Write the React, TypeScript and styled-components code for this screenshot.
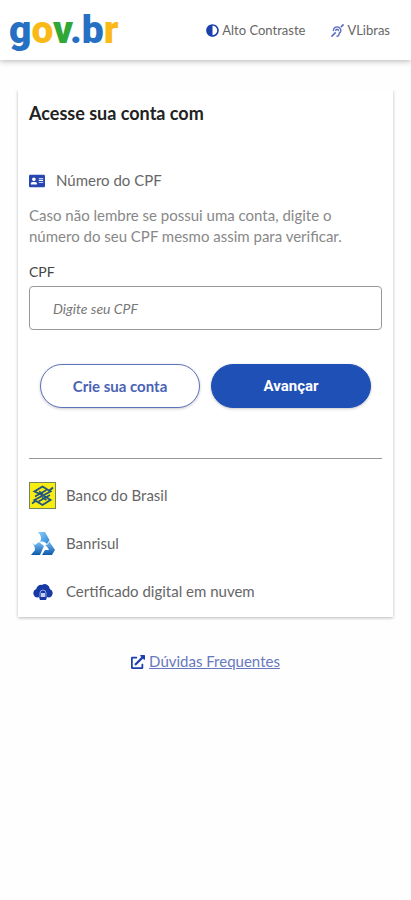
import React from "react";
import styled, { createGlobalStyle } from "styled-components";
import { FaAdjust, FaAddressCard, FaDeaf, FaExternalLinkAlt } from "react-icons/fa";

const GlobalStyle = createGlobalStyle`
  *, *::before, *::after { box-sizing: border-box; }
  body {
    margin: 0;
    background: #fefefe;
    color: #666;
    font-family: Lato, "Open Sans", sans-serif;
    font-size: 15px;
    line-height: 21px;
  }
`;

const Header = styled.header`
  display: flex;
  align-items: center;
  justify-content: space-between;
  height: 60px;
  padding: 0 21px 0 9px;
  background: #fff;
  box-shadow: 0 1px 6px rgba(0, 0, 0, 0.3);
`;

const Logo = styled.a`
  font-family: Roboto, sans-serif;
  font-size: 39px;
  font-weight: 900;
  line-height: 52px;
  text-decoration: none;
`;

const LogoPart = styled.span<{ $color: string }>`
  color: ${(p) => p.$color};
`;

const Tools = styled.nav`
  display: flex;
  gap: 26px;
`;

const Tool = styled.button`
  display: flex;
  align-items: center;
  gap: 3px;
  padding: 0;
  border: 0;
  background: none;
  color: #666;
  font: inherit;
  font-size: 13px;
  cursor: pointer;
`;

const ContrastIcon = styled(FaAdjust)`
  color: #1c3fae;
`;

const SignIcon = styled(FaDeaf)`
  color: #5a6cc0;
`;

const Main = styled.main`
  padding: 30px 18px 0;
`;

const Card = styled.section`
  padding: 12px 11px;
  background: #fff;
  box-shadow: 0 1px 3px rgba(0, 0, 0, 0.28);
  clip-path: inset(0 -6px -6px -6px);
`;

const Title = styled.h1`
  margin: 0 0 46px;
  color: #222;
  font-size: 18px;
  font-weight: 700;
  line-height: 22px;
`;

const Method = styled.div`
  display: flex;
  align-items: center;
  gap: 11px;
  margin-bottom: 14px;

  svg { color: #2746b0; }
`;

const Hint = styled.p`
  margin: 0 0 14px;
  color: #888;
`;

const Label = styled.label`
  display: block;
  margin-bottom: 4px;
  color: #444;
  font-size: 14px;
`;

const Field = styled.input`
  display: block;
  width: 100%;
  height: 44px;
  padding: 0 23px;
  border: 1px solid #999;
  border-radius: 4px;
  background: #fff;
  color: #333;
  font: inherit;
  font-size: 14px;

  &::placeholder {
    color: #777;
    font-style: italic;
    opacity: 1;
  }
`;

const Actions = styled.div`
  display: flex;
  gap: 11px;
  padding: 34px 11px 50px;
`;

const Action = styled.button<{ $primary?: boolean }>`
  flex: 1;
  height: 44px;
  padding: 0;
  border: 1px solid ${(p) => (p.$primary ? "#1f50b5" : "#5b73bb")};
  border-radius: 22px;
  background: ${(p) => (p.$primary ? "#1f50b5" : "#fff")};
  color: ${(p) => (p.$primary ? "#fff" : "#4a62b4")};
  box-shadow: 0 1px 3px rgba(0, 0, 0, 0.22);
  font-family: ${(p) => (p.$primary ? "Roboto" : "Lato")}, sans-serif;
  font-size: 15px;
  font-weight: 700;
  cursor: pointer;
`;

const Rule = styled.hr`
  height: 1px;
  margin: 0 0 23px;
  border: 0;
  background: #999;
`;

const Providers = styled.ul`
  display: grid;
  gap: 21px;
  margin: 0;
  padding: 0;
  list-style: none;
`;

const Provider = styled.a`
  display: grid;
  grid-template-columns: 27px 1fr;
  align-items: center;
  gap: 10px;
  min-height: 27px;
  color: #666;
  text-decoration: none;

  svg { justify-self: center; }
`;

const Footer = styled.footer`
  display: flex;
  justify-content: center;
  padding-top: 34px;
`;

const Faq = styled.a`
  display: flex;
  align-items: center;
  gap: 4px;
  color: #6878bf;

  svg { color: #1c3fae; }
`;

const BancoDoBrasilIcon = () => (
  <svg width="27" height="27" viewBox="0 0 27 27" aria-hidden="true">
    <rect x="0.5" y="0.5" width="26" height="26" fill="#f8ed12" stroke="#75855b" />
    <g fill="none" stroke="#1f5482" strokeWidth="1.9">
      <path d="M17 15 5.500 9.500 13.500 4.500 21.500 9.500 5.500 18 13.500 23 21.500 18 17 15" />
      <path d="M10 9.500 14 12M13 15.500 17.500 18M21 13 9.500 19.500M17.500 8 6 14.500" strokeWidth="1.5" />
      <path d="M3 21.500 6.500 19M20.500 8.500 24 5.500" />
    </g>
  </svg>
);

const BanrisulIcon = () => (
  <svg width="24" height="24" viewBox="0 0 24 24" aria-hidden="true">
    <defs>
      <linearGradient id="banrisulTop" x1="0" y1="0" x2="1" y2="1">
        <stop offset="0" stopColor="#8bcdf8" />
        <stop offset="1" stopColor="#2a86d6" />
      </linearGradient>
      <linearGradient id="banrisulSide" x1="0" y1="0" x2="0" y2="1">
        <stop offset="0" stopColor="#7cc1f3" />
        <stop offset="1" stopColor="#0b58ae" />
      </linearGradient>
    </defs>
    <path d="M7 0h7l4.500 8-2.500 4c-2-2-4-3-7-2 2-3 1-7-2-10z" fill="url(#banrisulTop)" />
    <path d="M0 10l4 3 4-3 5 4-4 9H0l4-5c0-3-1-6-4-8z" fill="url(#banrisulSide)" />
    <path d="M18 9l6 9-3 5H11l3-5h4c-1-2-2-4-4-5 2 0 4-1 4-4z" fill="url(#banrisulSide)" />
  </svg>
);

const CloudCertificateIcon = () => (
  <svg width="20" height="16" viewBox="0 0 20 16" aria-hidden="true">
    <path
      d="M4.500 13.500A4.400 4.400 0 0 1 3.200 5 4.800 4.800 0 0 1 9 1a5 5 0 0 1 7.800 4 4.400 4.400 0 0 1-1.300 8.500L14 13l-1 3H7l-1-3z"
      fill="#1739a5"
    />
    <path d="M7 13V9a3 3 0 0 1 6 0v4" fill="none" stroke="#8fa5e2" />
    <rect x="8" y="9" width="4" height="4" fill="#c3cff3" />
  </svg>
);

const providers = [
  { name: "Banco do Brasil", Icon: BancoDoBrasilIcon },
  { name: "Banrisul", Icon: BanrisulIcon },
  { name: "Certificado digital em nuvem", Icon: CloudCertificateIcon },
];

export default function App() {
  return (
    <>
      <GlobalStyle />
      <Header>
        <Logo href="#">
          <LogoPart $color="#2670c4">g</LogoPart>
          <LogoPart $color="#fbb917">o</LogoPart>
          <LogoPart $color="#2fa836">v</LogoPart>
          <LogoPart $color="#2670c4">.b</LogoPart>
          <LogoPart $color="#fbb917">r</LogoPart>
        </Logo>
        <Tools>
          <Tool type="button"><ContrastIcon size={13} />Alto Contraste</Tool>
          <Tool type="button"><SignIcon size={13} />VLibras</Tool>
        </Tools>
      </Header>
      <Main>
        <Card>
          <Title>Acesse sua conta com</Title>
          <Method><FaAddressCard size={16} />Número do CPF</Method>
          <Hint>
            Caso não lembre se possui uma conta, digite o número do seu CPF mesmo assim para verificar.
          </Hint>
          <Label htmlFor="cpf">CPF</Label>
          <Field id="cpf" type="text" inputMode="numeric" placeholder="Digite seu CPF" />
          <Actions>
            <Action type="button">Crie sua conta</Action>
            <Action type="button" $primary>Avançar</Action>
          </Actions>
          <Rule />
          <Providers>
            {providers.map(({ name, Icon }) => (
              <li key={name}>
                <Provider href="#"><Icon />{name}</Provider>
              </li>
            ))}
          </Providers>
        </Card>
      </Main>
      <Footer>
        <Faq href="#"><FaExternalLinkAlt size={14} />Dúvidas Frequentes</Faq>
      </Footer>
    </>
  );
}
